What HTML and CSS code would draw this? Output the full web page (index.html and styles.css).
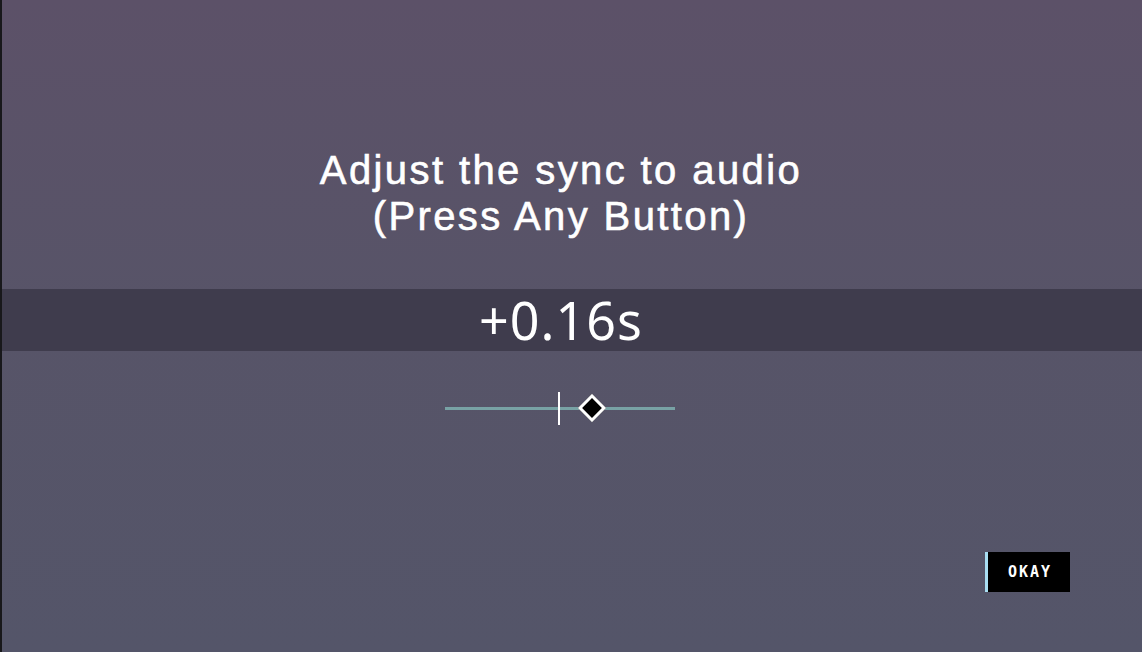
FILE: index.html
```html
<!DOCTYPE html>
<html lang="en">
<head>
<meta charset="utf-8"/>
<title>Audio Sync</title>
<link rel="stylesheet" href="styles.css">
</head>
<body>
  <main class="screen">
    <h1 class="prompt">Adjust the sync to audio<br>(Press Any Button)</h1>
    <div class="offset-band">
      <span class="offset">+0.16s</span>
    </div>
    <div class="slider">
      <div class="track"></div>
      <div class="tick"></div>
      <div class="knob"></div>
    </div>
    <div class="actions">
      <button class="okay">OKAY</button>
    </div>
  </main>
</body>
</html>
```
FILE: styles.css
```css
html, body {
  margin: 0;
  height: 100%;
}
body {
  background: linear-gradient(180deg, #5c5168 0%, #575468 50%, #545569 100%);
  border-left: 2px solid #18181b;
  box-sizing: border-box;
  overflow: hidden;
  font-family: 'Noto Sans', sans-serif;
  color: #fff;
}
.screen {
  display: flex;
  flex-direction: column;
  height: 100%;
}
.prompt {
  margin: 147px 0 0;
  padding-right: 22px;
  font-family: 'Liberation Sans', sans-serif;
  font-size: 40px;
  font-weight: normal;
  line-height: 46px;
  text-align: center;
  letter-spacing: 2.4px;
  -webkit-text-stroke: 0.6px #fff;
}
.offset-band {
  margin-top: 50px;
  height: 62px;
  background-color: #3f3c4d;
  display: flex;
  justify-content: center;
  align-items: center;
  padding-right: 22px;
}
.offset {
  font-size: 52px;
  line-height: 62px;
  letter-spacing: 1px;
}
.slider {
  position: relative;
  width: 230px;
  height: 34px;
  margin: 40px 0 0 443px;
}
.track {
  position: absolute;
  left: 0;
  right: 0;
  top: 16px;
  height: 3px;
  background-color: #78a2a5;
}
.tick {
  position: absolute;
  left: 113px;
  top: 1px;
  width: 2px;
  height: 33px;
  background-color: #fff;
}
.knob {
  position: absolute;
  left: 137px;
  top: 7px;
  width: 14px;
  height: 14px;
  background-color: #000;
  border: 3px solid #fff;
  transform: rotate(45deg);
}
.actions {
  display: flex;
  justify-content: flex-end;
  margin-top: 127px;
  padding-right: 72px;
}
.okay {
  width: 85px;
  height: 40px;
  background-color: #000;
  border: 0;
  border-left: 3px solid #a9def2;
  color: #fff;
  font-family: 'DejaVu Sans Mono', monospace;
  font-weight: bold;
  font-size: 15px;
  letter-spacing: 2px;
  padding: 0 0 0 2px;
}
```
